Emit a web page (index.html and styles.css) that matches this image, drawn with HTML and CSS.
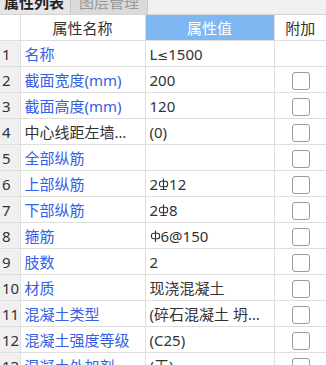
FILE: index.html
```html
<!DOCTYPE html>
<html>
<head>
    <title>属性列表</title>
    <link rel="stylesheet" href="styles.css">
</head>
<body>

<div class="tabbar">
  <div class="tabs">
    <span class="tablink active">属性列表</span>
    <span class="tablink">图层管理</span>
  </div>
</div>

<table class="props">
  <colgroup>
    <col class="c-idx">
    <col class="c-name">
    <col class="c-val">
    <col class="c-add">
  </colgroup>
  <tr class="head">
    <th class="idx"></th>
    <th>属性名称</th>
    <th class="hl">属性值</th>
    <th>附加</th>
  </tr>
  <tr><td class="idx">1</td><td class="name">名称</td><td class="val">L<span class="le">≤</span>1500</td><td class="add"></td></tr>
  <tr><td class="idx">2</td><td class="name">截面宽度(mm)</td><td class="val">200</td><td class="add"><span class="chk"></span></td></tr>
  <tr><td class="idx">3</td><td class="name">截面高度(mm)</td><td class="val">120</td><td class="add"><span class="chk"></span></td></tr>
  <tr><td class="idx">4</td><td class="name plain">中心线距左墙皮距离(mm)</td><td class="val">(0)</td><td class="add"><span class="chk"></span></td></tr>
  <tr><td class="idx">5</td><td class="name">全部纵筋</td><td class="val"></td><td class="add"><span class="chk"></span></td></tr>
  <tr><td class="idx">6</td><td class="name">上部纵筋</td><td class="val">2<svg class="bar" viewBox="0 0 12 14"><rect x="1.5" y="3.5" width="9" height="6" rx="2.5"/><path d="M6 0.5V12.5M2.5 12.5H9.5"/></svg>12</td><td class="add"><span class="chk"></span></td></tr>
  <tr><td class="idx">7</td><td class="name">下部纵筋</td><td class="val">2<svg class="bar" viewBox="0 0 12 14"><rect x="1.5" y="3.5" width="9" height="6" rx="2.5"/><path d="M6 0.5V12.5M2.5 12.5H9.5"/></svg>8</td><td class="add"><span class="chk"></span></td></tr>
  <tr><td class="idx">8</td><td class="name">箍筋</td><td class="val"><svg class="bar" viewBox="0 0 12 14"><rect x="1.5" y="3.5" width="9" height="6" rx="2.5"/><path d="M6 0.5V13"/></svg>6@150</td><td class="add"><span class="chk"></span></td></tr>
  <tr><td class="idx">9</td><td class="name">肢数</td><td class="val">2</td><td class="add"><span class="chk"></span></td></tr>
  <tr><td class="idx">10</td><td class="name">材质</td><td class="val">现浇混凝土</td><td class="add"><span class="chk"></span></td></tr>
  <tr><td class="idx">11</td><td class="name">混凝土类型</td><td class="val">(碎石混凝土 坍落度35~50)</td><td class="add"><span class="chk"></span></td></tr>
  <tr><td class="idx">12</td><td class="name">混凝土强度等级</td><td class="val">(C25)</td><td class="add"><span class="chk"></span></td></tr>
  <tr><td class="idx">13</td><td class="name">混凝土外加剂</td><td class="val">(无)</td><td class="add"><span class="chk"></span></td></tr>
</table>

</body>
</html>
```

FILE: styles.css
```css
body {
    margin: 0;
    padding: 0;
    background-color: #fff;
    font-family: "Noto Sans", "Noto Sans CJK SC", sans-serif;
    overflow: hidden;
}

/* tab strip, scrolled so only the lower half shows */
.tabbar {
    height: 14px;
    overflow: hidden;
    background-color: #f0f0f0;
    border-bottom: 1px solid #d4d4d4;
}

.tabs {
    display: flex;
    margin-top: -10px;
}

.tablink {
    padding: 0 8px;
    height: 24px;
    line-height: 24px;
    font-size: 15px;
    color: #999;
    background-color: #dadada;
    border-left: 1px solid #c6c6c6;
    border-right: 1px solid #c6c6c6;
}

.tablink.active {
    color: #222;
    font-weight: bold;
    background-color: #e6e6e6;
    border: none;
    padding: 0 6px 0 4px;
}

.props {
    width: 326px;
    table-layout: fixed;
    border-collapse: collapse;
    font-size: 15px;
}

.c-idx { width: 20px; }
.c-name { width: 125px; }
.c-val { width: 129px; }
.c-add { width: 52px; }

.props th,
.props td {
    height: 25px;
    padding: 0 4px;
    border: 1px solid #dedede;
    white-space: nowrap;
    overflow: hidden;
    text-overflow: ellipsis;
    color: #333;
}

.props tr:first-child th { border-top: none; }
.props th:first-child,
.props td:first-child { border-left: none; }
.props th:last-child,
.props td:last-child { border-right: none; }

.props th {
    font-weight: normal;
    text-align: center;
    color: #333;
}

.props th.hl {
    background-color: #7fb7f3;
    color: #fff;
}

.props td.idx {
    background-color: #f0f0f0;
    padding: 0 0 0 2px;
    text-align: left;
}

.props td.name {
    color: #3560e6;
}

.props td.name.plain {
    color: #333;
}

.props td.add {
    text-align: center;
    padding: 0 0 0 2px;
}

.le {
    font-family: "DejaVu Sans", sans-serif;
    font-size: 13px;
}

.chk {
    display: inline-block;
    width: 16px;
    height: 16px;
    border: 1px solid #9a9a9a;
    border-radius: 3px;
    background-color: #fff;
    vertical-align: middle;
}

.bar {
    width: 11px;
    height: 13px;
    vertical-align: -1px;
    fill: none;
    stroke: #333;
    stroke-width: 1.2;
}
```
